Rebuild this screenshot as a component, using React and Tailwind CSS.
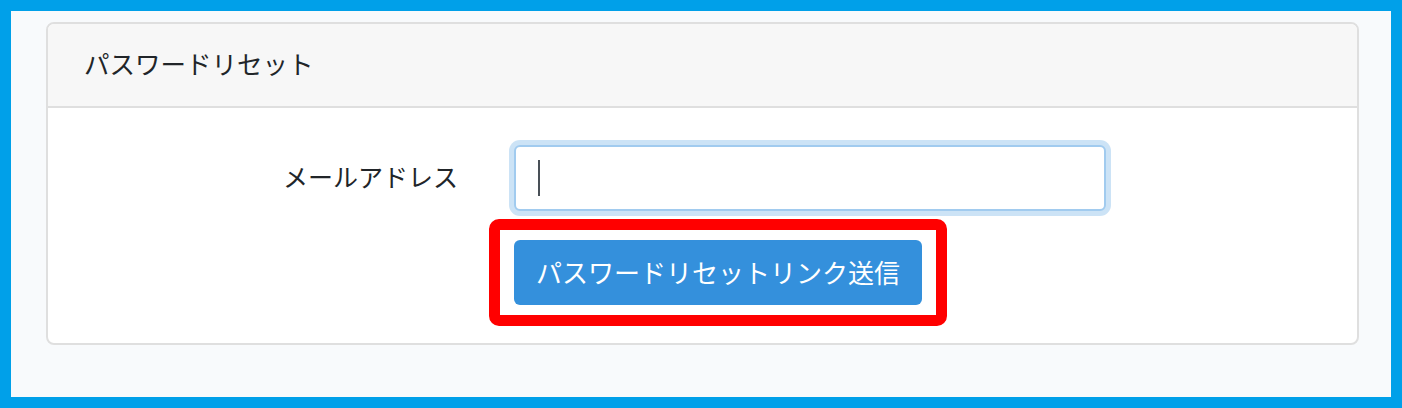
export default function App() {
  const jp = { fontFamily: '"Noto Sans CJK JP", "Noto Sans", sans-serif' };

  return (
    <div
      className="w-[1402px] h-[408px] border-[11px] border-[#00a0e9] bg-[#f8fafc] overflow-hidden"
      style={jp}
    >
      <div className="ml-[35px] mt-[11px] w-[1313px] rounded-[8px] border-2 border-[#dfdfdf] bg-white overflow-hidden">
        {/* header */}
        <div className="h-[84px] flex items-center pl-[36px] pb-[4px] bg-[#f7f7f7] border-b-2 border-[#dfdfdf] text-[25.5px] leading-none text-[#212529]">
          パスワードリセット
        </div>

        {/* body */}
        <div className="pt-[37px] pb-[17px]">
          <div className="flex items-center">
            <label className="w-[410px] text-right text-[25px] text-[#212529] leading-none pb-[4px]">
              メールアドレス
            </label>
            <div className="ml-[56px] w-[592px] h-[66px] rounded-[6px] border-2 border-[#a1cbef] ring-[5px] ring-[#3490dc]/25 bg-white flex items-center pl-[22px]">
              <span className="block w-[2px] h-[36px] bg-[#495057]" />
            </div>
          </div>

          <div className="mt-[8px] pl-[441px] flex">
            <div className="border-[11px] border-[#ff0000] rounded-[10px] px-[14px] py-[10px]">
              <button className="w-[408px] h-[65px] rounded-[6px] bg-[#3490dc] text-white text-[26px] leading-none pb-[2px] flex items-center justify-center">
                パスワードリセットリンク送信
              </button>
            </div>
          </div>
        </div>
      </div>
    </div>
  );
}
